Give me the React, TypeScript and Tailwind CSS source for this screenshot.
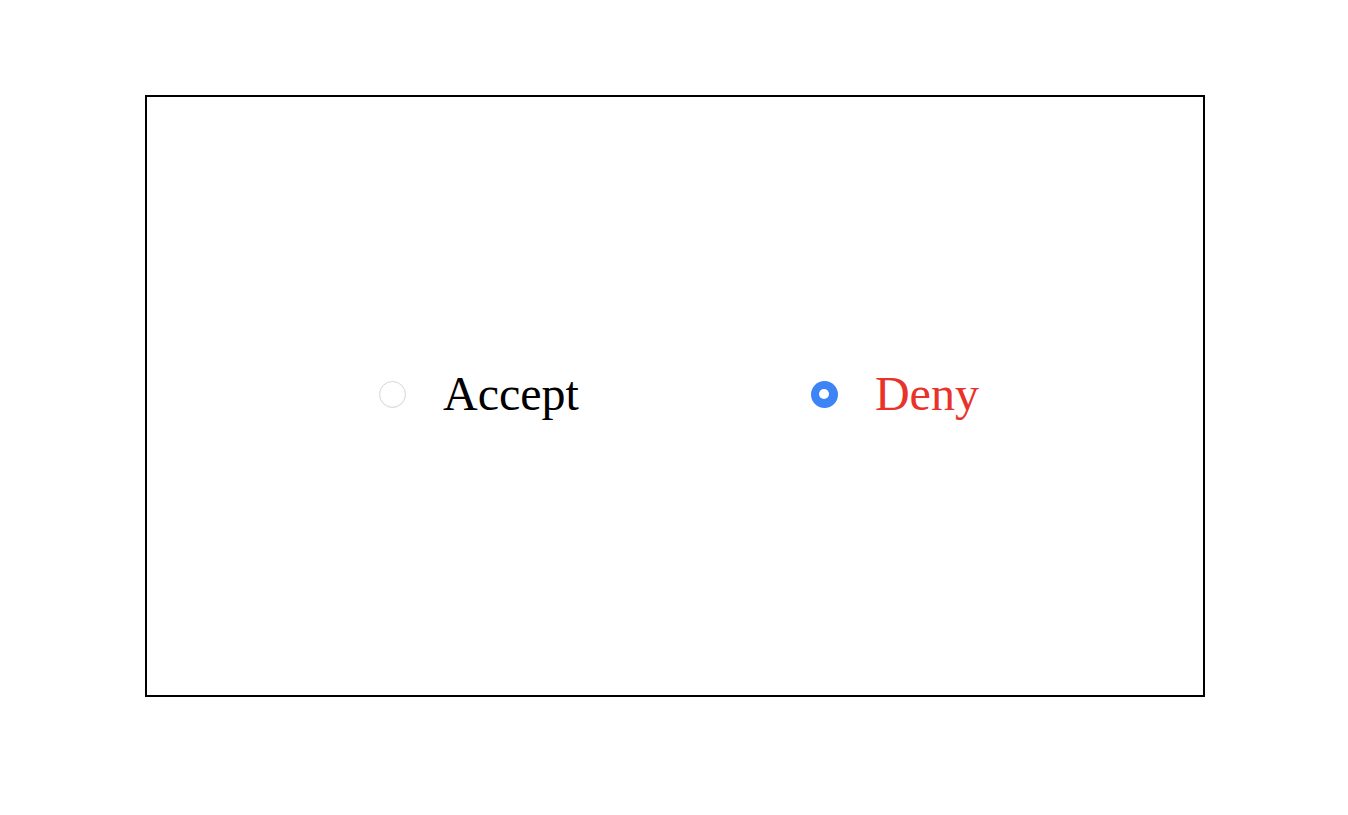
import React, { useState } from 'react';

export default function App() {
  const [choice, setChoice] = useState<'accept' | 'deny'>('deny');

  return (
    <div className="w-screen h-screen bg-white pt-[95px] pl-[145px]">
      <div className="w-[1060px] h-[602px] border-2 border-black flex items-center pl-[232px] gap-[232px] pb-[4px]">
        {/* Accept option */}
        <label className="flex items-center cursor-pointer" onClick={() => setChoice('accept')}>
          <span
            className={
              choice === 'accept'
                ? 'w-[27px] h-[27px] rounded-full bg-[#3d84f7] flex items-center justify-center'
                : 'w-[27px] h-[27px] rounded-full border border-[#d6d6d6] bg-white shadow-[inset_0_-1px_2px_rgba(0,0,0,0.04)]'
            }
          >
            {choice === 'accept' && <span className="w-[10px] h-[10px] rounded-full bg-white" />}
          </span>
          <span
            className={`ml-[37px] text-[48px] leading-none ${choice === 'accept' ? 'text-[#e8322a]' : 'text-black'}`}
            style={{ fontFamily: "'Liberation Serif', 'Times New Roman', serif" }}
          >
            Accept
          </span>
        </label>

        {/* Deny option */}
        <label className="flex items-center cursor-pointer" onClick={() => setChoice('deny')}>
          <span
            className={
              choice === 'deny'
                ? 'w-[27px] h-[27px] rounded-full bg-[#3d84f7] flex items-center justify-center'
                : 'w-[27px] h-[27px] rounded-full border border-[#d6d6d6] bg-white shadow-[inset_0_-1px_2px_rgba(0,0,0,0.04)]'
            }
          >
            {choice === 'deny' && <span className="w-[10px] h-[10px] rounded-full bg-white" />}
          </span>
          <span
            className={`ml-[37px] text-[48px] leading-none ${choice === 'deny' ? 'text-[#e8322a]' : 'text-black'}`}
            style={{ fontFamily: "'Liberation Serif', 'Times New Roman', serif" }}
          >
            Deny
          </span>
        </label>
      </div>
    </div>
  );
}
